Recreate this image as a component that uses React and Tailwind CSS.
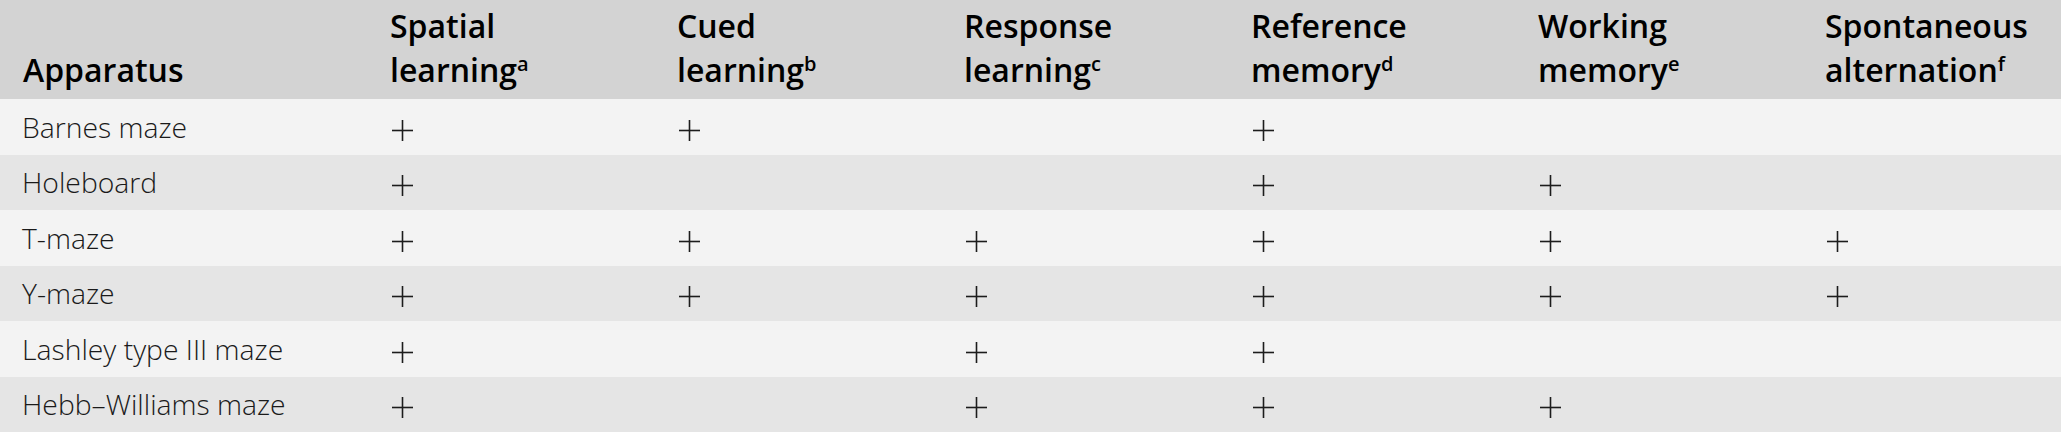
import React from "react";

const cols = [
  ["Spatial", "learning", "a"],
  ["Cued", "learning", "b"],
  ["Response", "learning", "c"],
  ["Reference", "memory", "d"],
  ["Working", "memory", "e"],
  ["Spontaneous", "alternation", "f"],
];

const rows = [
  ["Barnes maze", [1, 1, 0, 1, 0, 0]],
  ["Holeboard", [1, 0, 0, 1, 1, 0]],
  ["T-maze", [1, 1, 1, 1, 1, 1]],
  ["Y-maze", [1, 1, 1, 1, 1, 1]],
  ["Lashley type III maze", [1, 0, 1, 1, 0, 0]],
  ["Hebb\u2013Williams maze", [1, 0, 1, 1, 1, 0]],
];

function Plus() {
  return (
    <svg width="21" height="21" viewBox="0 0 21 21" className="ml-[2px] mt-[7px] block">
      <line x1="0" y1="10.5" x2="21" y2="10.5" stroke="#1c1c1c" strokeWidth="1.6" />
      <line x1="10.5" y1="0" x2="10.5" y2="21" stroke="#1c1c1c" strokeWidth="1.6" />
    </svg>
  );
}

const grid = "grid grid-cols-[390px_287px_287px_287px_287px_287px_1fr]";

export default function App() {
  return (
    <div
      className="w-[2061px] h-[432px] overflow-hidden bg-[#f3f3f3]"
      style={{ fontFamily: '"Open Sans", "Liberation Sans", sans-serif' }}
    >
      <div className={`${grid} h-[99px] bg-[#d3d3d3] text-black font-semibold text-[32px] leading-[44px] pt-[4px] pb-[7px] items-end`}>
        <div className="pl-[23px]">Apparatus</div>
        {cols.map(([a, b, s]) => (
          <div key={a}>
            <div>{a}</div>
            <div>
              {b}
              <span className="text-[20px] leading-[0] align-[11px] font-semibold">{s}</span>
            </div>
          </div>
        ))}
      </div>
      {rows.map(([name, marks], i) => (
        <div
          key={name}
          className={`${grid} h-[55.5px] items-center font-light text-[28.3px] text-[#1a1a1a] ${
            i % 2 === 0 ? "bg-[#f3f3f3]" : "bg-[#e5e5e5]"
          }`}
        >
          <div className="pl-[22px] leading-none">{name}</div>
          {marks.map((m, j) => (
            <div key={j} className="flex items-center">
              {m ? <Plus /> : null}
            </div>
          ))}
        </div>
      ))}
    </div>
  );
}
